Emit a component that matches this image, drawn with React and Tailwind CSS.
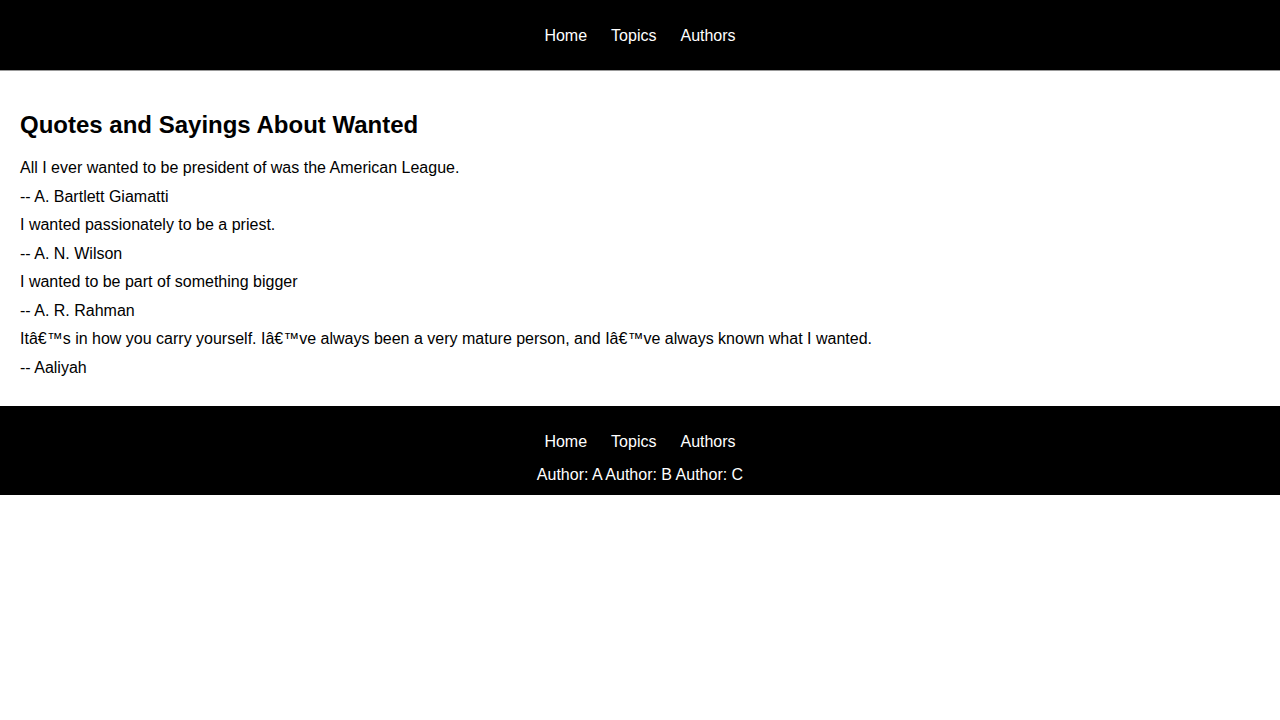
import React from "react";

const links = ["Home", "Topics", "Authors"];

const quotes = [
  {
    text: "All I ever wanted to be president of was the American League.",
    author: "A. Bartlett Giamatti",
  },
  { text: "I wanted passionately to be a priest.", author: "A. N. Wilson" },
  { text: "I wanted to be part of something bigger", author: "A. R. Rahman" },
  {
    text: "Itâ€™s in how you carry yourself. Iâ€™ve always been a very mature person, and Iâ€™ve always known what I wanted.",
    author: "Aaliyah",
  },
];

const Nav = () => (
  <nav className="flex justify-center gap-6 text-[16px] leading-[24px] text-white">
    {links.map((l) => (
      <a key={l} href="#" className="text-white">
        {l}
      </a>
    ))}
  </nav>
);

export default function App() {
  return (
    <div className="bg-white text-black font-['Liberation_Sans',Arial,sans-serif]">
      <header className="h-[71px] pt-[2px] bg-black border-b border-[#999] flex items-center justify-center">
        <Nav />
      </header>

      <main className="px-5 pt-[39px] pb-[24px]">
        <h2 className="text-[24px] leading-[29px] font-bold">
          Quotes and Sayings About Wanted
        </h2>
        <div className="mt-[15px] text-[16px] leading-[28.5px]">
          {quotes.map((q) => (
            <React.Fragment key={q.author}>
              <p>{q.text}</p>
              <p>-- {q.author}</p>
            </React.Fragment>
          ))}
        </div>
      </main>

      <footer className="bg-black text-white pt-[24px] pb-[10px]">
        <Nav />
        <div className="mt-[11px] text-center text-[16px] leading-[20px]">
          Author: A Author: B Author: C
        </div>
      </footer>
    </div>
  );
}
